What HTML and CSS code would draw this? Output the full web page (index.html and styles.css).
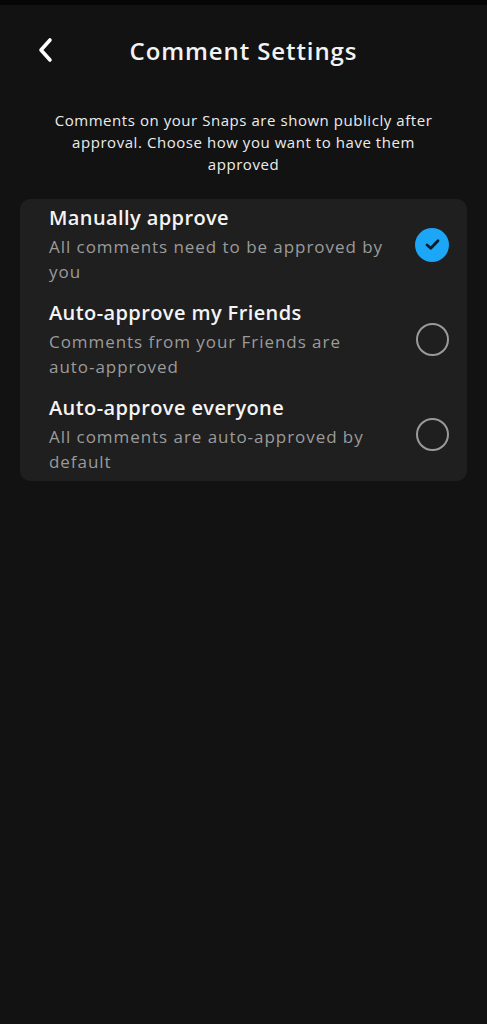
FILE: index.html
```html
<!DOCTYPE html>
<html lang="en">
<head>
  <meta charset="UTF-8">
  <meta name="viewport" content="width=device-width, initial-scale=1.0">
  <title>Comment Settings</title>
  <link rel="stylesheet" href="styles.css">
</head>
<body>
  <div class="status-strip"></div>

  <!-- Header -->
  <header class="header">
    <button class="back" aria-label="Back">
      <svg width="20" height="26" viewBox="0 0 20 26">
        <path d="M14 3 L5 13 L14 23" fill="none" stroke="#fff" stroke-width="3.6" stroke-linecap="round" stroke-linejoin="round"/>
      </svg>
    </button>
    <h1>Comment Settings</h1>
  </header>

  <p class="intro">Comments on your Snaps are shown publicly after approval. Choose how you want to have them approved</p>

  <!-- Options -->
  <div class="card">
    <div class="option">
      <div class="option-text">
        <div class="option-title">Manually approve</div>
        <div class="option-sub">All comments need to be approved by you</div>
      </div>
      <span class="radio checked">
        <svg width="15" height="13" viewBox="0 0 15 13">
          <path d="M2 7 L5.8 10.2 L13 2.8" fill="none" stroke="#0d1b26" stroke-width="2.8" stroke-linecap="round" stroke-linejoin="round"/>
        </svg>
      </span>
    </div>
    <div class="option">
      <div class="option-text">
        <div class="option-title">Auto-approve my Friends</div>
        <div class="option-sub">Comments from your Friends are auto&#8209;approved</div>
      </div>
      <span class="radio"></span>
    </div>
    <div class="option">
      <div class="option-text">
        <div class="option-title">Auto-approve everyone</div>
        <div class="option-sub">All comments are auto&#8209;approved by default</div>
      </div>
      <span class="radio"></span>
    </div>
  </div>
</body>
</html>
```

FILE: styles.css
```css
body {
  margin: 0;
  background-color: #121212;
  color: #fff;
  font-family: 'Open Sans', 'Noto Sans', sans-serif;
  min-height: 1024px;
}

.status-strip {
  height: 5px;
  background-color: #060606;
}

/* Header */
.header {
  position: relative;
  height: 90px;
  display: flex;
  align-items: center;
  justify-content: center;
}

.header h1 {
  margin: 0;
  font-size: 24px;
  font-weight: 600;
  letter-spacing: 0.9px;
  color: #f2f2f2;
}

.back {
  position: absolute;
  left: 36px;
  top: 32px;
  background: none;
  border: none;
  padding: 0;
  cursor: pointer;
}

.intro {
  margin: 14px 48px 0;
  text-align: center;
  font-size: 15px;
  line-height: 22px;
  letter-spacing: 0.55px;
  color: #ececec;
}

/* Options card */
.card {
  margin: 24px 20px 0;
  background-color: #1f1f1f;
  border-radius: 10px;
  padding: 6px 18px 7px 29px;
  display: flex;
  flex-direction: column;
  gap: 16px;
}

.option {
  display: flex;
  align-items: center;
  justify-content: space-between;
}

.option-text {
  width: 340px;
}

.option-title {
  font-size: 20px;
  font-weight: 600;
  line-height: 26px;
  letter-spacing: 0.4px;
  margin-bottom: 3px;
  color: #f4f4f4;
}

.option-sub {
  font-size: 17px;
  line-height: 25px;
  letter-spacing: 0.95px;
  color: #9b9b9b;
}

.radio {
  width: 29px;
  height: 29px;
  border: 2px solid #9a9a9a;
  border-radius: 50%;
  flex-shrink: 0;
  display: flex;
  align-items: center;
  justify-content: center;
}

.radio.checked {
  width: 34px;
  height: 34px;
  border: none;
  background-color: #1ba6f7;
}
```
